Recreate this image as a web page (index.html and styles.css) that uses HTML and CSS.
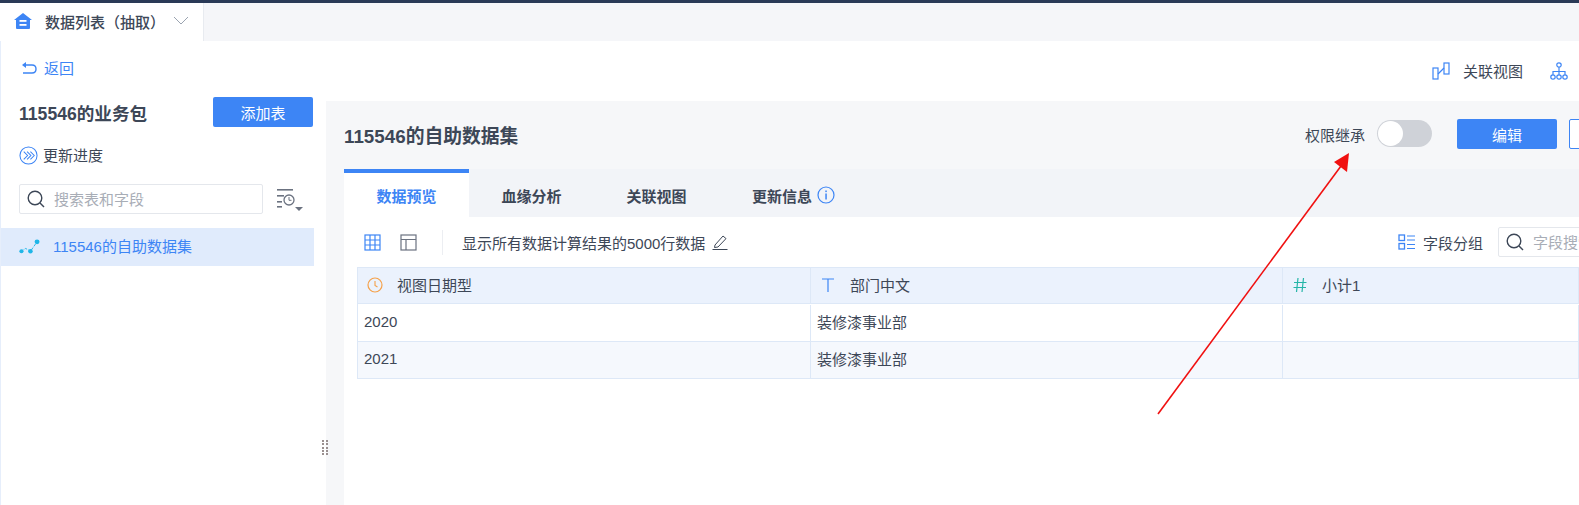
FILE: index.html
```html
<!DOCTYPE html>
<html lang="zh-CN">
<head>
    <meta charset="UTF-8">
    <title>数据列表（抽取）</title>
    <link rel="stylesheet" href="styles.css">
</head>
<body>
<div class="tabbar">
    <div class="page-tab">
        <svg class="home-icon" viewBox="0 0 18 16"><path d="M9 0 L18 7 L16 7 L16 15 Q16 16 15 16 L3 16 Q2 16 2 15 L2 7 L0 7 Z" fill="#3d85f5"/><rect x="5.5" y="7" width="7" height="1.8" fill="#fff"/><rect x="5.5" y="11" width="7" height="1.8" fill="#fff"/></svg>
        <span class="page-tab-name">数据列表（抽取）</span>
        <svg class="chevron" viewBox="0 0 16 9"><path d="M1 1 L8 8 L15 1" fill="none" stroke="#9aa3b0" stroke-width="1"/></svg>
    </div>
</div>

<div class="toprow">
    <a class="back">
        <svg viewBox="0 0 16 14" width="16" height="14"><path d="M5 1 L1 4 L5 7 Z" fill="#3d85f5"/><path d="M4 4 H11 Q15 4 15 8 Q15 12 11 12 H2" fill="none" stroke="#3d85f5" stroke-width="1.4"/></svg>
        返回
    </a>
    <div class="top-actions">
        <span class="top-action">
            <svg viewBox="0 0 18 18" width="18" height="18"><rect x="1" y="6" width="5" height="11" fill="none" stroke="#3d85f5" stroke-width="1.2"/><rect x="12" y="1" width="5" height="11" fill="none" stroke="#3d85f5" stroke-width="1.2"/><path d="M6 12 L12 6" stroke="#3d85f5" stroke-width="1.2"/></svg>
            关联视图
        </span>
        <svg class="org-icon" viewBox="0 0 18 18" width="18" height="18"><g fill="none" stroke="#3d85f5" stroke-width="1.2"><circle cx="9" cy="3" r="2.2"/><circle cx="3" cy="15" r="2.2"/><circle cx="9" cy="15" r="2.2"/><circle cx="15" cy="15" r="2.2"/><path d="M9 5.2 V12.8 M3 12.8 V9.5 H15 V12.8"/></g></svg>
    </div>
</div>

<div class="workspace">
    <aside class="sidebar">
        <div class="pack-row">
            <h2 class="pack-name">115546的业务包</h2>
            <button class="btn add-btn">添加表</button>
        </div>
        <div class="progress">
            <svg viewBox="0 0 20 20" width="19" height="19"><circle cx="10" cy="10" r="9" fill="none" stroke="#3d85f5" stroke-width="1.1"/><path d="M5 6 L9 10 L5 14 M8.5 6 L12.5 10 L8.5 14 M12 6 L16 10 L12 14" fill="none" stroke="#3d85f5" stroke-width="1.1"/></svg>
            <span class="progress-text">更新进度</span>
        </div>
        <div class="search-row">
            <div class="search side-search">
                <svg viewBox="0 0 18 18" width="18" height="18"><circle cx="8" cy="8" r="6.8" fill="none" stroke="#3d4757" stroke-width="1.4"/><path d="M13 13 L17 17" stroke="#3d4757" stroke-width="1.4"/></svg>
                <span class="placeholder">搜索表和字段</span>
            </div>
            <svg class="sort-icon" viewBox="0 0 26 24" width="26" height="24"><g fill="#6b7280"><rect x="0" y="1" width="16" height="1.6"/><rect x="0" y="7" width="7" height="1.6"/><rect x="0" y="13" width="5" height="1.6"/><rect x="0" y="18" width="5" height="1.6"/><path d="M18 19 H26 L22 23 Z"/></g><circle cx="12" cy="12" r="5" fill="none" stroke="#6b7280" stroke-width="1.3"/><path d="M12 9 V12.3 H14.5" fill="none" stroke="#6b7280"/></svg>
        </div>
        <div class="dataset-item">
            <svg viewBox="0 0 22 18" width="21" height="17"><path d="M2 13 L7 10 L12 13 L19 3" fill="none" stroke="#1fb6e8" stroke-width="1" stroke-dasharray="3 1.5"/><circle cx="2.5" cy="13" r="2.2" fill="#1fb6e8"/><circle cx="12" cy="13" r="2.4" fill="#1fb6e8"/><circle cx="19" cy="3" r="2.6" fill="#1fb6e8"/></svg>
            <span>115546的自助数据集</span>
        </div>
        <div class="drag-handle"></div>
    </aside>

    <main class="panel">
        <div class="panel-head">
            <h1 class="panel-title">115546的自助数据集</h1>
            <div class="panel-tools">
                <span class="inherit-label">权限继承</span>
                <span class="toggle"><span class="toggle-knob"></span></span>
                <button class="btn edit-btn">编辑</button>
                <button class="btn outline-btn"></button>
            </div>
        </div>

        <div class="tabs">
            <div class="tab active">数据预览</div>
            <div class="tab">血缘分析</div>
            <div class="tab">关联视图</div>
            <div class="tab">更新信息
                <svg viewBox="0 0 18 18" width="18" height="18"><circle cx="9" cy="9" r="8" fill="none" stroke="#3d85f5" stroke-width="1.2"/><rect x="8.3" y="7.5" width="1.5" height="6" fill="#3d85f5"/><rect x="8.3" y="4.5" width="1.5" height="1.6" fill="#3d85f5"/></svg>
            </div>
        </div>

        <div class="content">
            <div class="toolbar">
                <svg viewBox="0 0 17 17" width="17" height="17"><g fill="none" stroke="#3d85f5" stroke-width="1.2"><rect x="1" y="1" width="15" height="15"/><path d="M6 1 V16 M11 1 V16 M1 6 H16 M1 11 H16"/></g></svg>
                <svg class="layout-icon" viewBox="0 0 17 17" width="17" height="17"><g fill="none" stroke="#6b7280" stroke-width="1.2"><rect x="1" y="1" width="15" height="15"/><path d="M1 5.5 H16 M6 5.5 V16"/></g></svg>
                <span class="tool-sep"></span>
                <span class="tool-text">显示所有数据计算结果的5000行数据</span>
                <svg class="pen-icon" viewBox="0 0 16 16" width="16" height="16"><path d="M3 11 L11 2 L14 4.6 L6 13 L2.5 13.5 Z" fill="none" stroke="#3d4757" stroke-width="1"/><path d="M0.5 15.5 H15.5" stroke="#3d4757"/></svg>
                <span class="group-btn">
                    <svg viewBox="0 0 18 16" width="18" height="16"><g fill="none" stroke="#3d85f5" stroke-width="1.3"><rect x="1" y="1" width="5.5" height="5.5"/><rect x="1" y="9.5" width="5.5" height="5.5"/></g><path d="M9 2 H17 M9 6 H17 M9 10.5 H17 M9 14.5 H17" stroke="#3d85f5" stroke-width="1.2"/></svg>
                    字段分组
                </span>
                <div class="search field-search">
                    <svg viewBox="0 0 18 18" width="18" height="18"><circle cx="8" cy="8" r="6.8" fill="none" stroke="#3d4757" stroke-width="1.4"/><path d="M13 13 L17 17" stroke="#3d4757" stroke-width="1.4"/></svg>
                    <span class="placeholder">字段搜索</span>
                </div>
            </div>

            <div class="grid">
                <div class="cell head">
                    <svg viewBox="0 0 16 16" width="16" height="16"><circle cx="8" cy="8" r="7" fill="none" stroke="#f5a14a" stroke-width="1.2"/><path d="M8 4 V8.5 L10.5 10" fill="none" stroke="#f5a14a" stroke-width="1.1"/></svg>
                    视图日期型
                </div>
                <div class="cell head">
                    <svg viewBox="0 0 16 16" width="16" height="16"><path d="M2 2 H14 M8 2 V15" fill="none" stroke="#3d85f5" stroke-width="1.2"/></svg>
                    部门中文
                </div>
                <div class="cell head">
                    <svg viewBox="0 0 16 16" width="16" height="16"><path d="M6 1 L4.5 15 M11.5 1 L10 15 M2 5.5 H14.5 M1.5 10.5 H14" fill="none" stroke="#26b5a8" stroke-width="1.2"/></svg>
                    小计1
                </div>
                <div class="cell">2020</div>
                <div class="cell">装修漆事业部</div>
                <div class="cell"></div>
                <div class="cell alt">2021</div>
                <div class="cell alt">装修漆事业部</div>
                <div class="cell alt"></div>
            </div>
        </div>
    </main>
</div>

<!-- annotation drawn over the screenshot -->
<svg class="arrow" viewBox="0 0 1579 505"><path d="M1158 414 L1341 166" stroke="#f01010" stroke-width="1.6" fill="none"/><path d="M1349 153 L1347 172 L1334 162 Z" fill="#f01010"/></svg>
</body>
</html>
```

FILE: styles.css
```css
html,body {
    margin: 0;
    width: 100%;
    height: 100%;
    overflow: hidden;
    background: #fff;
    font-family: "Liberation Sans", "Noto Sans CJK SC", sans-serif;
    font-size: 15px;
    color: #3d4757;
}
svg {
    flex: none;
    display: block;
}
h1, h2 {
    margin: 0;
    font-weight: bold;
    color: #3d4757;
}
.tabbar {
    height: 38px;
    border-top: 3px solid #2a3a57;
    background: #f5f6f9;
}
.page-tab {
    width: 189px;
    height: 38px;
    padding-left: 14px;
    background: #fff;
    border-right: 1px solid #e8ebf0;
    display: flex;
    align-items: center;
    font-weight: 500;
}
.page-tab-name {
    margin-left: 13px;
    width: 128px;
    margin-top: -2px;
    white-space: nowrap;
}
.home-icon {
    width: 18px;
    height: 16px;
    margin-top: -2px;
}
.chevron {
    width: 16px;
    height: 9px;
    margin-top: -3px;
}
.toprow {
    height: 60px;
    display: flex;
    align-items: center;
    justify-content: space-between;
    padding: 0 11px 0 20px;
    box-sizing: border-box;
    border-left: 1px solid #e6eefb;
}
.back {
    display: flex;
    align-items: center;
    gap: 7px;
    color: #3d85f5;
    margin-top: -7px;
}
.top-actions {
    display: flex;
    align-items: center;
    gap: 27px;
    margin-top: -1px;
}
.top-action {
    display: flex;
    align-items: center;
    gap: 13px;
}
.workspace {
    display: flex;
    height: 406px;
}
.sidebar {
    width: 326px;
    flex: none;
    position: relative;
    box-sizing: border-box;
    border-left: 1px solid #e6eefb;
}
.pack-row {
    height: 30px;
    margin-top: -4px;
    padding: 0 13px 0 18px;
    display: flex;
    align-items: center;
    justify-content: space-between;
}
.pack-name {
    font-size: 17.6px;
}
.btn {
    font-family: inherit;
    font-size: 15px;
    color: #fff;
    background: #3d85f5;
    border: 0;
    border-radius: 2px;
    padding: 0;
}
.add-btn {
    width: 100px;
    height: 30px;
}
.progress {
    display: flex;
    align-items: center;
    gap: 5px;
    height: 22px;
    margin: 17px 0 0 18px;
}
.progress-text {
    margin-top: -2px;
}
.search {
    display: flex;
    align-items: center;
    gap: 9px;
    box-sizing: border-box;
    height: 30px;
    padding-left: 7px;
    border: 1px solid #e4e7ec;
    border-radius: 2px;
    background: #fff;
    white-space: nowrap;
    overflow: hidden;
}
.placeholder {
    color: #a8adb6;
    margin-top: -2px;
}
.search-row {
    display: flex;
    align-items: center;
    margin: 18px 0 0 18px;
}
.side-search {
    width: 244px;
}
.sort-icon {
    margin-left: 14px;
    margin-top: 2px;
}
.dataset-item {
    width: 313px;
    height: 38px;
    margin-top: 14px;
    padding-left: 18px;
    box-sizing: border-box;
    background: #e0ebfc;
    color: #3d85f5;
    display: flex;
    align-items: center;
    gap: 13px;
}
.dataset-item span {
    margin-top: -3px;
}
.drag-handle {
    position: absolute;
    left: 321px;
    top: 339px;
    width: 6px;
    height: 15px;
    background-image: repeating-linear-gradient(to bottom, #9a9090 0 2px, transparent 2px 3.3px);
    -webkit-mask-image: linear-gradient(to right, #000 0 2px, transparent 2px 4px, #000 4px);
}
.panel {
    flex: 1;
    min-width: 0;
    background: #f6f7f9;
    padding-left: 18px;
    display: flex;
    flex-direction: column;
    overflow: hidden;
}
.panel-head {
    height: 68px;
    padding-bottom: 2px;
    box-sizing: border-box;
    display: flex;
    align-items: center;
    justify-content: space-between;
    white-space: nowrap;
}
.panel-title {
    font-size: 18.8px;
}
.panel-tools {
    display: flex;
    align-items: center;
    margin-right: -36px;
}
.toggle {
    width: 55px;
    height: 27px;
    margin: 0 0 2px 12px;
    padding: 1px;
    box-sizing: border-box;
    border-radius: 14px;
    background: #cfd2d8;
    display: block;
}
.toggle-knob {
    display: block;
    width: 25px;
    height: 25px;
    border-radius: 50%;
    background: #fff;
}
.edit-btn {
    width: 100px;
    height: 30px;
    margin-left: 25px;
}
.outline-btn {
    width: 46px;
    height: 30px;
    margin-left: 12px;
    box-sizing: border-box;
    background: #fff;
    border: 1px solid #3d85f5;
}
.tabs {
    height: 48px;
    display: flex;
    background: #f2f4f8;
}
.tab {
    width: 125px;
    box-sizing: border-box;
    padding-top: 4px;
    display: flex;
    align-items: center;
    justify-content: center;
    gap: 5px;
    font-weight: bold;
    color: #3d4757;
    white-space: nowrap;
}
.tab:last-child {
    margin-left: 12px;
}
.tab.active {
    background: #fff;
    border-top: 4px solid #3d85f5;
    padding-top: 0;
    color: #3d85f5;
}
.content {
    flex: 1;
    background: #fff;
    padding-left: 13px;
}
.toolbar {
    height: 50px;
    display: flex;
    align-items: center;
    white-space: nowrap;
}
.toolbar > svg:first-child {
    margin-left: 7px;
}
.layout-icon {
    margin-left: 19px;
}
.tool-sep {
    width: 1px;
    height: 25px;
    margin: 0 19px 0 25px;
    background: #eceef2;
}
.pen-icon {
    margin-left: 7px;
}
.group-btn {
    display: flex;
    align-items: center;
    gap: 7px;
    margin-left: auto;
}
.field-search {
    width: 96px;
    flex: none;
    margin: 0 -15px 0 15px;
}
.grid {
    display: grid;
    grid-template-columns: 453px 472px 1fr;
    grid-auto-rows: 37px;
    border-top: 1px solid #dde8f7;
    border-left: 1px solid #dde8f7;
}
.cell {
    display: flex;
    align-items: center;
    gap: 14px;
    padding-left: 6px;
    padding-bottom: 3px;
    box-sizing: border-box;
    border-right: 1px solid #dde8f7;
    border-bottom: 1px solid #dde8f7;
    white-space: nowrap;
}
.cell.head {
    background: #ebf2fd;
    height: 36px;
    padding-left: 9px;
    padding-bottom: 2px;
}
.cell.alt {
    background: #f5f8fd;
}
.arrow {
    position: absolute;
    left: 0;
    top: 0;
    width: 1579px;
    height: 505px;
    pointer-events: none;
}
```
